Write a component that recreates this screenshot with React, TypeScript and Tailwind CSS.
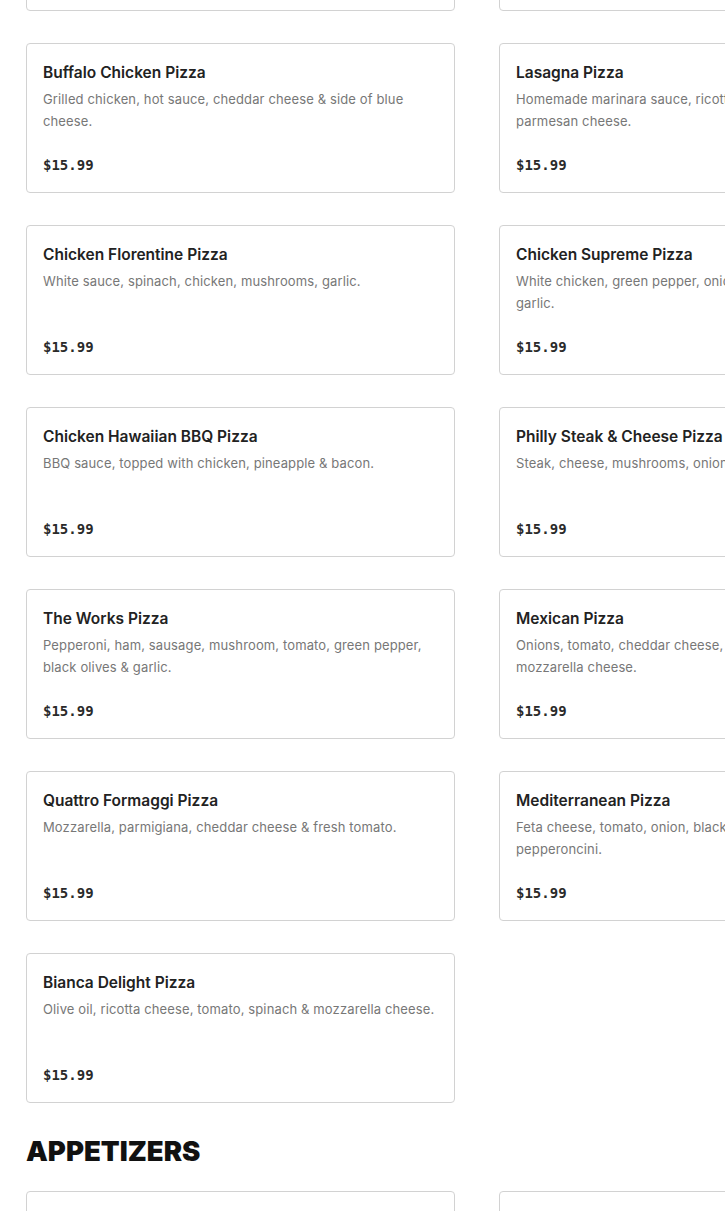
import React from 'react';

type Item = { name: string; desc: string; price: string };

const pizzas: Item[] = [
  { name: 'Veggie Pizza', desc: 'Green pepper, onion, mushroom, tomato, black olives.', price: '$15.99' },
  { name: 'Meat Lovers Pizza', desc: 'Pepperoni, ham, sausage, bacon & ground beef.', price: '$15.99' },
  { name: 'Buffalo Chicken Pizza', desc: 'Grilled chicken, hot sauce, cheddar cheese & side of blue cheese.', price: '$15.99' },
  { name: 'Lasagna Pizza', desc: 'Homemade marinara sauce, ricotta cheese, mozzarella & parmesan cheese.', price: '$15.99' },
  { name: 'Chicken Florentine Pizza', desc: 'White sauce, spinach, chicken, mushrooms, garlic.', price: '$15.99' },
  { name: 'Chicken Supreme Pizza', desc: 'White chicken, green pepper, onion, mushroom, tomato & garlic.', price: '$15.99' },
  { name: 'Chicken Hawaiian BBQ Pizza', desc: 'BBQ sauce, topped with chicken, pineapple & bacon.', price: '$15.99' },
  { name: 'Philly Steak & Cheese Pizza', desc: 'Steak, cheese, mushrooms, onions & peppers.', price: '$15.99' },
  { name: 'The Works Pizza', desc: 'Pepperoni, ham, sausage, mushroom, tomato, green pepper, black olives & garlic.', price: '$15.99' },
  { name: 'Mexican Pizza', desc: 'Onions, tomato, cheddar cheese, jalapeños, ground beef & mozzarella cheese.', price: '$15.99' },
  { name: 'Quattro Formaggi Pizza', desc: 'Mozzarella, parmigiana, cheddar cheese & fresh tomato.', price: '$15.99' },
  { name: 'Mediterranean Pizza', desc: 'Feta cheese, tomato, onion, black olives, spinach & pepperoncini.', price: '$15.99' },
  { name: 'Bianca Delight Pizza', desc: 'Olive oil, ricotta cheese, tomato, spinach & mozzarella cheese.', price: '$15.99' },
];

const appetizers: Item[] = [
  { name: 'Garlic Knots', desc: 'Six knots brushed with garlic butter & parmesan.', price: '$5.99' },
  { name: 'Mozzarella Sticks', desc: 'Served with marinara sauce.', price: '$8.99' },
];

const MenuCard = ({ item }: { item: Item }) => (
  <div className="h-[150px] rounded-[4px] border border-[#d2d2d2] bg-white px-4 pt-[17px] pb-4 flex flex-col">
    <h3 className="text-[15.5px] leading-[24px] font-semibold text-[#222]" style={{ fontFamily: 'Inter, sans-serif' }}>
      {item.name}
    </h3>
    <p className="mt-[3px] text-[13px] leading-[22px] tracking-[0.13px] text-[#777]" style={{ fontFamily: 'Inter, sans-serif' }}>
      {item.desc}
    </p>
    <div className="mt-auto text-[14px] leading-[22px] font-bold text-[#2a2a2a]" style={{ fontFamily: '"DejaVu Sans Mono", monospace' }}>
      {item.price}
    </div>
  </div>
);

const App = () => {
  return (
    <div className="min-h-screen bg-white overflow-hidden">
      <div className="w-[1000px] pl-[26px] -mt-[139px]">
        <div className="grid grid-cols-[429px_429px] gap-x-[44px] gap-y-[32px]">
          {pizzas.map((p) => (
            <MenuCard key={p.name} item={p} />
          ))}
        </div>

        <h2
          className="mt-[30px] mb-[22px] text-[27.5px] leading-[36px] font-black text-[#111]"
          style={{ fontFamily: 'Inter, sans-serif' }}
        >
          APPETIZERS
        </h2>

        <div className="grid grid-cols-[429px_429px] gap-x-[44px] gap-y-[32px]">
          {appetizers.map((p) => (
            <MenuCard key={p.name} item={p} />
          ))}
        </div>
      </div>
    </div>
  );
};

export default App;
